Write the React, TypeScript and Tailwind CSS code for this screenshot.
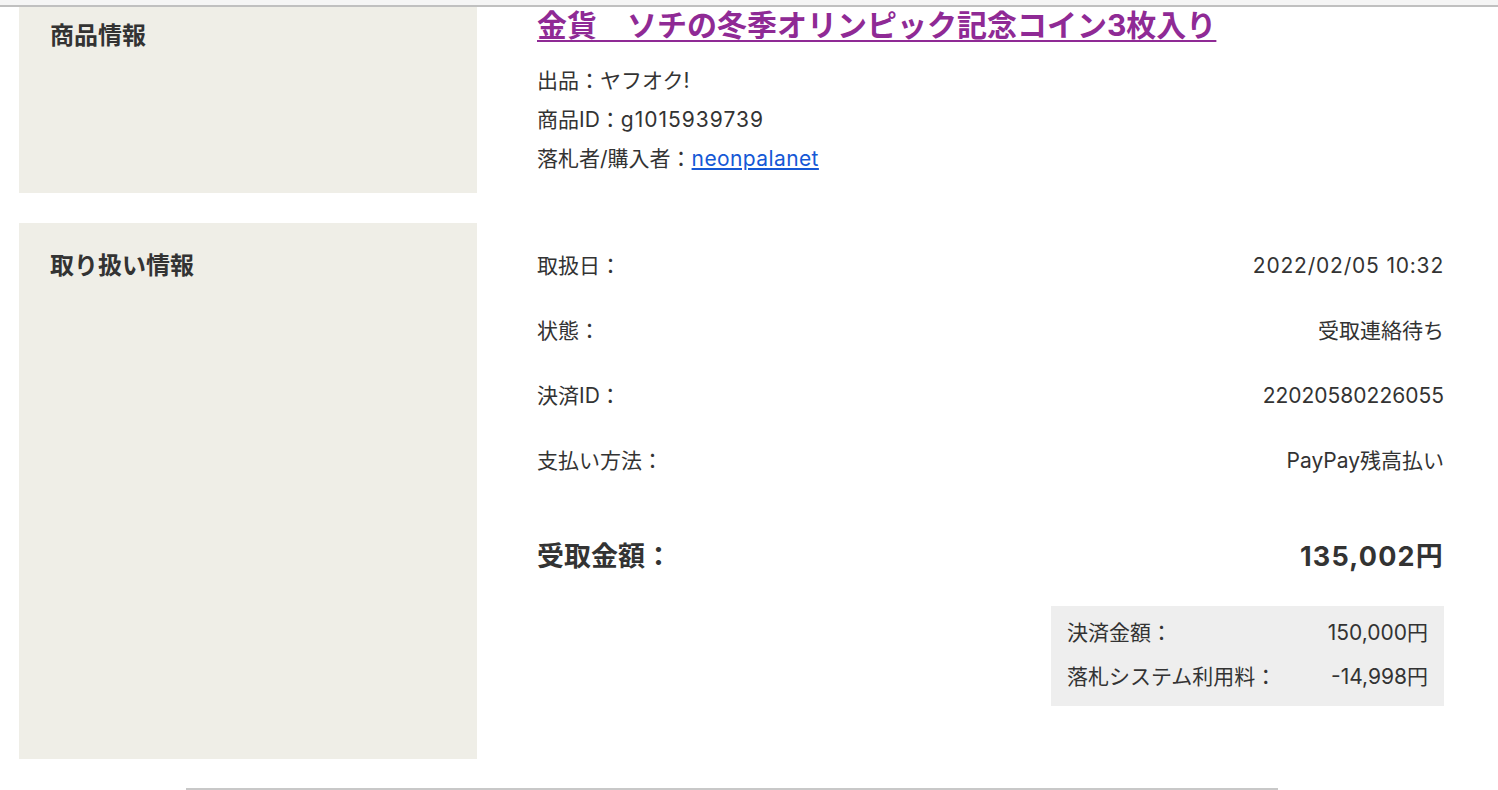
import React from "react";

function Row({ label, value, wide }: { label: string; value: string; wide?: boolean }) {
  return (
    <div className="flex h-[65px] items-center justify-between text-[21px] text-[#333333]">
      <span>{label}</span>
      <span className={wide ? "tracking-[0.8px]" : ""}>{value}</span>
    </div>
  );
}

export default function App() {
  return (
    <div className="min-h-[790px] bg-white font-['Inter','Noto_Sans_CJK_JP',sans-serif] text-[#333333]">
      <div className="h-[5px] bg-[#f5f5f5]" />
      <div className="h-[2px] bg-[#c0c0c0]" />
      <div className="px-[19px]">
        {/* Row 1 */}
        <div className="flex">
          <div className="w-[458px] shrink-0 bg-[#efeee7] pl-[31px] pt-[11px]">
            <h2 className="text-[24px] font-bold leading-[36px]">商品情報</h2>
          </div>
          <div className="flex-1 pl-[60px] pr-[35px] pb-[15px]">
            <a
              href="#"
              className="block text-[30px] font-bold leading-[36px] text-[#8f2a95] underline underline-offset-[4px] decoration-2"
            >
              金貨　ソチの冬季オリンピック記念コイン3枚入り
            </a>
            <div className="mt-[18px] text-[21px] leading-[39px]">
              <div>出品：ヤフオク!</div>
              <div>
                商品ID：<span className="tracking-[1px]">g1015939739</span>
              </div>
              <div>
                落札者/購入者：
                <a href="#" className="text-[#1558d6] underline tracking-[0.4px]">
                  neonpalanet
                </a>
              </div>
            </div>
          </div>
        </div>

        {/* Row 2 */}
        <div className="mt-[30px] flex">
          <div className="w-[458px] shrink-0 bg-[#efeee7] pl-[31px] pt-[25px]">
            <h2 className="text-[24px] font-bold leading-[36px]">取り扱い情報</h2>
          </div>
          <div className="flex-1 pl-[60px] pr-[35px] pt-[10px] pb-[53px]">
            <Row label="取扱日：" value="2022/02/05 10:32" wide />
            <Row label="状態：" value="受取連絡待ち" />
            <Row label="決済ID：" value="22020580226055" />
            <Row label="支払い方法：" value="PayPay残高払い" />
            <div className="mt-[44px] flex h-[40px] items-center justify-between text-[27px] font-bold">
              <span>受取金額：</span>
              <span className="tracking-[1.2px]">135,002円</span>
            </div>
            <div className="mt-[29px] flex justify-end">
              <div className="w-[393px] bg-[#eeeeee] px-[16px] pt-[5px] pb-[7px] text-[21px]">
                <div className="flex h-[44px] items-center justify-between">
                  <span>決済金額：</span>
                  <span>150,000円</span>
                </div>
                <div className="flex h-[44px] items-center justify-between">
                  <span>落札システム利用料：</span>
                  <span>-14,998円</span>
                </div>
              </div>
            </div>
          </div>
        </div>

        <div className="mt-[29px] ml-[167px] h-[2px] w-[1092px] bg-[#c8c8c8]" />
      </div>
    </div>
  );
}
